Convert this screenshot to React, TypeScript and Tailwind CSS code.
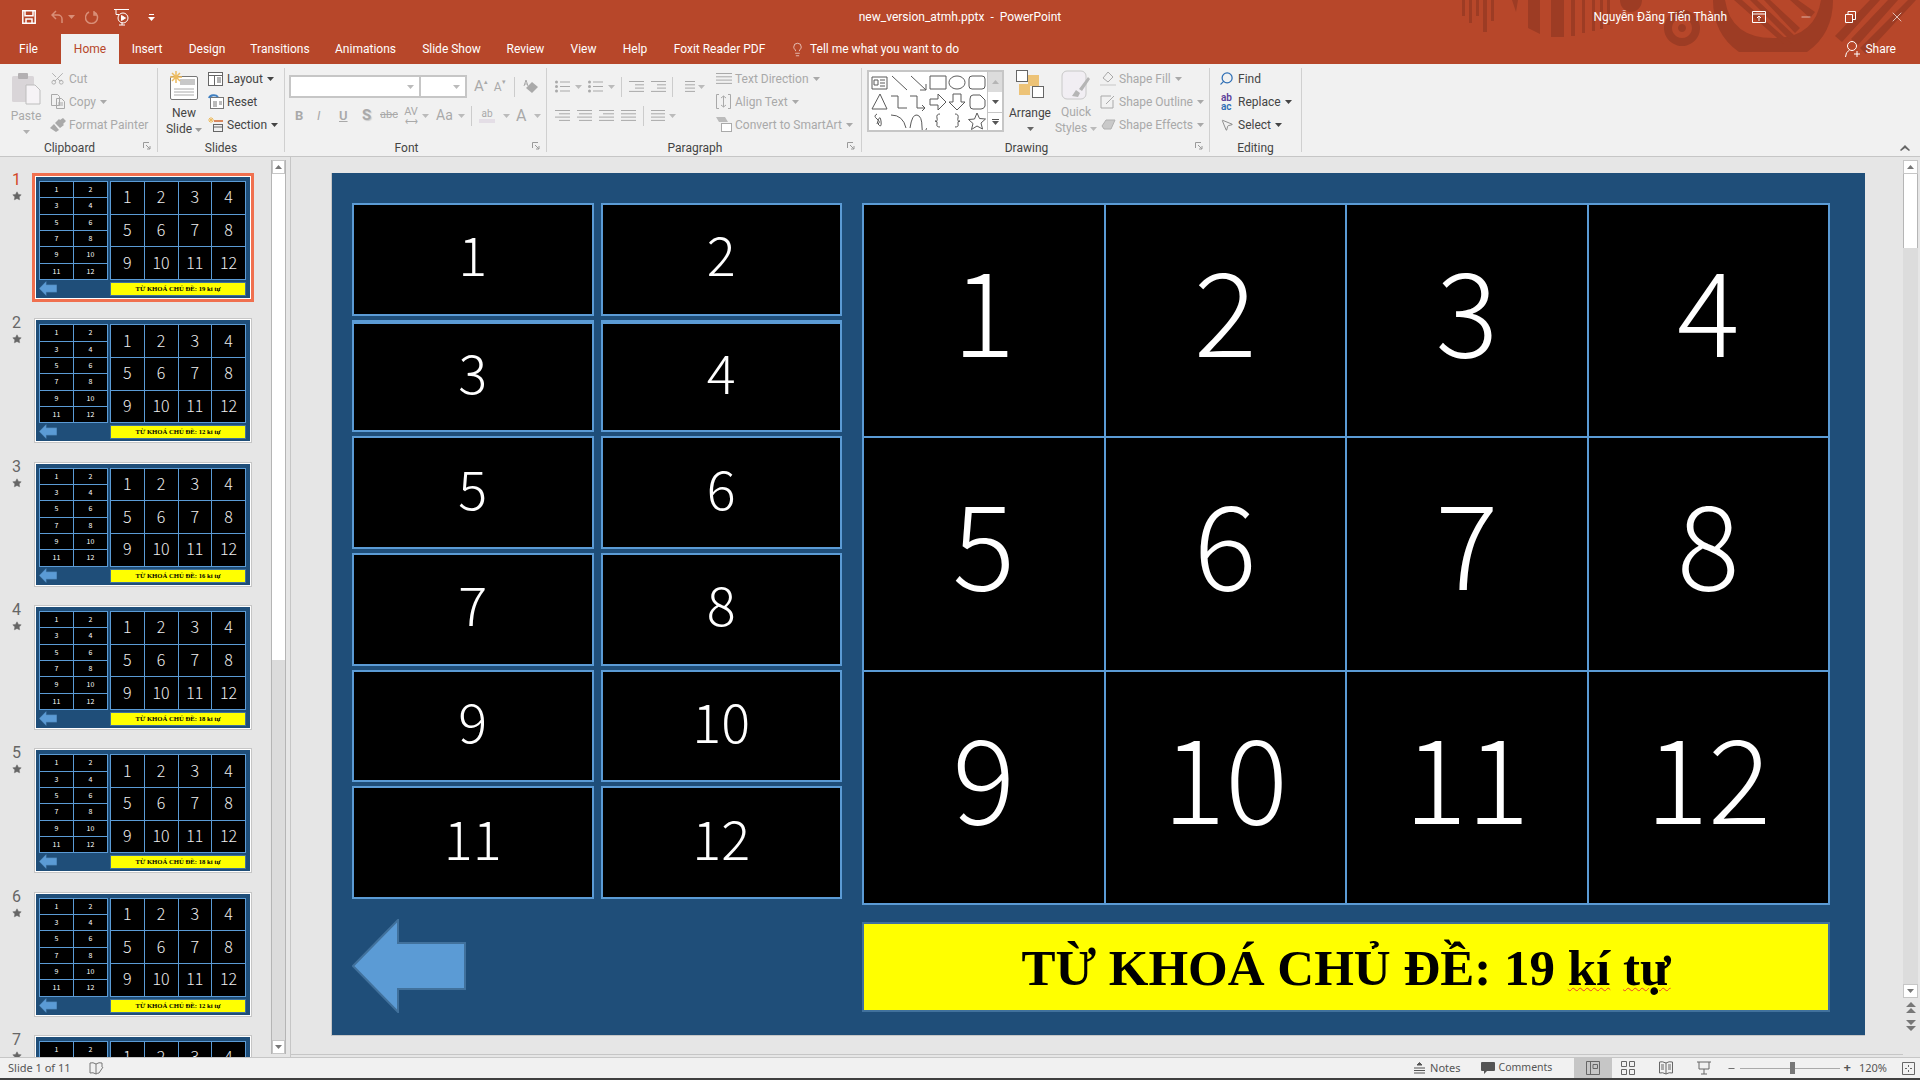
import React from 'react';
import { Lightbulb, Search, Scissors, X, Minus, MousePointer2, Star } from 'lucide-react';

const DIM = 'text-[#a9a9a9]';
const INK = 'text-[#444444]';

const Caret = ({ className = 'text-[#9a9a9a]' }: { className?: string }) => (
    <svg width="7" height="4" viewBox="0 0 7 4" className={`inline-block shrink-0 ${className}`}>
        <path d="M0 0h7L3.5 4z" fill="currentColor" />
    </svg>
);

const Launcher = () => (
    <svg width="8" height="8" viewBox="0 0 8 8" className="absolute right-[6px] bottom-[2px] text-[#9a9a9a]" fill="none" stroke="currentColor">
        <path d="M.5 6V.5H6M3 3l4 4M7 4v3H4" />
    </svg>
);

const Group = ({ w, label, launcher, children }: { w: string; label: string; launcher?: boolean; children: React.ReactNode }) => (
    <div className={`relative flex h-[84px] shrink-0 flex-col border-r border-[#d0d0d0] ${w}`}>
        <div className="flex h-[73px] shrink-0 items-start">{children}</div>
        <div className={`text-center text-[12px] leading-[14px] text-[#444444] ${launcher ? 'pr-[18px]' : ''}`}>{label}</div>
        {launcher && <Launcher />}
    </div>
);

const Row = ({ icon, text, dim, caret, className = '' }: { icon: React.ReactNode; text: string; dim?: boolean; caret?: boolean; className?: string }) => (
    <div className={`flex h-[23px] items-center gap-[3px] text-[12px] whitespace-nowrap ${dim ? DIM : INK} ${className}`}>
        <span className="flex w-[17px] shrink-0 items-center justify-center">{icon}</span>
        <span>{text}</span>
        {caret && <Caret className="ml-[1px]" />}
    </div>
);

const Lines = ({ rows, w = 14 }: { rows: number[]; w?: number }) => (
    <svg width={w} height="13" viewBox={`0 0 ${w} 13`} stroke="currentColor" fill="none" className={DIM}>
        {rows.map((r, i) => (
            <path key={i} d={`M${r} ${1.5 + i * 3.3}H${w}`} />
        ))}
    </svg>
);

const Bullets = () => (
    <svg width="15" height="13" viewBox="0 0 15 13" className={DIM} fill="currentColor">
        <circle cx="1.500" cy="2" r="1.500" /><circle cx="1.500" cy="6.500" r="1.500" /><circle cx="1.500" cy="11" r="1.500" />
        <path d="M5 1.500h10v1H5zM5 6h10v1H5zM5 10.500h10v1H5z" />
    </svg>
);

const ClipboardGroup = () => (
    <Group w="w-[158px]" label="Clipboard" launcher>
        <div className={`ml-[10px] flex w-[32px] flex-col items-center ${DIM}`}>
            <svg width="30" height="32" viewBox="0 0 30 32" className="mt-[5px]">
                <rect x="1" y="3" width="22" height="26" rx="1.5" fill="#d9d5d8" />
                <rect x="7" y="0" width="10" height="6" rx="1" fill="#b3b0b2" />
                <path d="M15 12h9l5 5v14H15z" fill="#f6f3f6" stroke="#bdbdbd" />
            </svg>
            <span className="mt-[2px] text-[12px] leading-[18px]">Paste</span>
            <Caret className="mt-[5px] text-[#b0b0b0]" />
        </div>
        <div className="ml-[7px] -mt-px flex flex-col">
            <Row dim text="Cut" icon={<Scissors size={15} strokeWidth={1.4} className="-scale-x-100 rotate-90" />} />
            <Row dim caret text="Copy" icon={
                <svg width="14" height="15" viewBox="0 0 14 15" fill="none" stroke="currentColor"><path d="M.5.5h6l2 2v9h-8zM5.500 4.500h5l3 3v7h-8zM7 9h5M7 11h5" /></svg>
            } />
            <Row dim text="Format Painter" icon={
                <svg width="16" height="14" viewBox="0 0 16 14" fill="currentColor"><path d="M0 10l4-4 5 6-3 2zM5 5l4-4 1 1 3-2 3 3-3 3 1 1-4 3z" /></svg>
            } />
        </div>
    </Group>
);

const SlidesGroup = () => (
    <Group w="w-[127px]" label="Slides">
        <div className={`ml-[4px] flex w-[44px] flex-col items-center text-center text-[12px] leading-[16px] ${INK}`}>
            <svg width="32" height="30" viewBox="0 0 32 30" className="mt-[3px]">
                <rect x="2.500" y="5.500" width="27" height="23" rx="1.500" fill="#fff" stroke="#777" />
                <rect x="12" y="8" width="15" height="6" fill="#c8c8c8" />
                <path d="M6 18h20M6 21h20M6 24h20" stroke="#aaa" />
                <path d="M8 0v12M2 6h12M4 2l8 8M12 2l-8 8" stroke="#edbb5f" strokeWidth="1.500" />
            </svg>
            <span className="mt-[4px]">New</span>
            <span>Slide <Caret /></span>
        </div>
        <div className="ml-[1px] -mt-px flex flex-col">
            <Row text="Layout" caret icon={
                <svg width="15" height="14" viewBox="0 0 15 14" fill="#fff" stroke="#666"><rect x=".5" y=".5" width="14" height="13" /><path d="M.5 3.500h14M6.500 3.500v10M9 6h4M9 8h4M9 10h4" /></svg>
            } />
            <Row text="Reset" icon={
                <svg width="16" height="15" viewBox="0 0 16 15" fill="#fff" stroke="#777"><rect x="2.500" y="3.500" width="13" height="11" /><path d="M5 8h4M5 10h4M5 12h4M11 8h3M11 10h3" /><path d="M1 4a5 4 0 0 1 9-1" stroke="#3f7fc1" strokeWidth="2" fill="none" /></svg>
            } />
            <Row text="Section" caret icon={
                <svg width="16" height="15" viewBox="0 0 16 15" fill="none"><path d="M3 0v6M0 3h6M1 1l4 4M5 1L1 5" stroke="#edbb5f" /><path d="M6 4h9" stroke="#d2652c" strokeWidth="1.500" /><rect x="5.500" y="7.500" width="9" height="7" stroke="#666" /><path d="M5.500 10h9" stroke="#666" /></svg>
            } />
        </div>
    </Group>
);

const FontGroup = () => (
    <Group w="w-[262px]" label="Font" launcher>
        <div className={`flex flex-col pl-[4px] pt-[7px] ${DIM}`}>
            <div className="flex h-[23px] items-center">
                <div className="flex h-[23px] w-[132px] items-center justify-end border-2 border-[#c6c6c6] bg-white pr-[5px]"><Caret className="text-[#bbbbbb]" /></div>
                <div className="flex h-[23px] w-[46px] items-center justify-end border-y-2 border-r-2 border-[#c6c6c6] bg-white pr-[5px]"><Caret className="text-[#bbbbbb]" /></div>
                <span className="ml-[7px] text-[15px]">A</span><span className="mb-[8px] text-[7px]">▴</span>
                <span className="ml-[6px] text-[12px]">A</span><span className="mb-[8px] text-[7px]">▾</span>
                <div className="mx-[8px] h-[20px] w-px bg-[#cccccc]" />
                <svg width="16" height="16" viewBox="0 0 16 16" fill="currentColor"><path d="M3 9L9 3l6 5-6 6z" /><path d="M1 7l2-6 2 6M2 5h2" fill="none" stroke="currentColor" /></svg>
            </div>
            <div className="mt-[6px] flex h-[23px] items-center text-[13px]">
                <span className="ml-[6px] w-[22px] font-bold">B</span>
                <span className="w-[22px] italic">I</span>
                <span className="w-[23px] font-semibold underline">U</span>
                <span className="w-[18px] text-[15px] font-bold [text-shadow:1px_1px_1px_#cccccc]">S</span>
                <span className="w-[20px] text-[11px] line-through">abc</span>
                <span className="flex w-[22px] flex-col items-center text-[11px] leading-[11px]">AV<span className="text-[9px] leading-[8px]">⟷</span></span>
                <Caret className="text-[#bbbbbb]" />
                <span className="ml-[7px] w-[22px] text-[14px]">Aa</span>
                <Caret className="text-[#bbbbbb]" />
                <div className="mx-[6px] h-[20px] w-px bg-[#cccccc]" />
                <span className="flex w-[18px] flex-col items-center text-[10px] leading-[11px]">ab<span className="h-[4px] w-[16px] bg-[#e4dee6]" /></span>
                <Caret className="ml-[7px] text-[#bbbbbb]" />
                <span className="ml-[6px] text-[16px]">A</span>
                <Caret className="ml-[8px] text-[#bbbbbb]" />
            </div>
        </div>
    </Group>
);

const ParagraphGroup = () => (
    <Group w="w-[315px]" label="Paragraph" launcher>
        <div className={`flex w-[168px] flex-col pl-[8px] pt-[7px] ${DIM}`}>
            <div className="flex h-[23px] items-center">
                <Bullets />
                <Caret className="ml-[5px] mr-[6px] text-[#bbbbbb]" />
                <Bullets />
                <Caret className="ml-[5px] mr-[6px] text-[#bbbbbb]" />
                <div className="h-[20px] w-px bg-[#cccccc]" />
                <span className="mx-[7px]"><Lines rows={[0, 6, 6, 0]} w={15} /></span>
                <Lines rows={[0, 6, 6, 0]} w={15} />
                <div className="mx-[6px] h-[20px] w-px bg-[#cccccc]" />
                <Lines rows={[6, 6, 6, 6]} w={16} />
                <Caret className="ml-[3px] text-[#bbbbbb]" />
            </div>
            <div className="mt-[6px] flex h-[23px] items-center gap-[7px]">
                <Lines rows={[0, 4, 0, 4]} w={15} />
                <Lines rows={[0, 2, 0, 2]} w={15} />
                <Lines rows={[0, 4, 0, 0]} w={15} />
                <Lines rows={[0, 0, 0, 0]} w={15} />
                <div className="h-[20px] w-px bg-[#cccccc]" />
                <Lines rows={[0, 0, 0, 0]} w={14} />
                <Caret className="-ml-[3px] text-[#bbbbbb]" />
            </div>
        </div>
        <div className="-mt-px flex flex-col">
            <Row dim caret text="Text Direction" icon={<Lines rows={[0, 0, 0, 0]} w={16} />} />
            <Row dim caret text="Align Text" icon={
                <svg width="15" height="15" viewBox="0 0 15 15" fill="none" stroke="currentColor"><path d="M3 .5H.5v14H3M12 .5h2.500v14H12M7.500 2v11M5 4l2.500-2L10 4M5 11l2.500 2 2.500-2" /></svg>
            } />
            <Row dim caret text="Convert to SmartArt" icon={
                <svg width="16" height="15" viewBox="0 0 16 15" fill="#bbb"><path d="M0 0h9l3 5H3z" /><rect x="5.500" y="6.500" width="10" height="8" fill="#fff" stroke="#aaa" /></svg>
            } />
        </div>
    </Group>
);

const shapePaths = [
    'M1 3h15v12H1zM3 6h4v5H3zM9 6h5M9 9h5M9 12h5',
    'M2 2L17 16',
    'M2 2L17 16M17 10v6h-6',
    'M1 2h16v13H1z',
    'M9 2a8 6.500 0 1 0 .01 0z',
    'M4 2h10q3 0 3 3v7q0 3-3 3H4q-3 0-3-3V5q0-3 3-3z',
    'M9 1L1 16h15z',
    'M1 3h7v12h9',
    'M1 3h7v12h7M13 12l3 3-3 3',
    'M1 6h8V1l8 8-8 8v-5H1z',
    'M5 1h8v8h4l-8 8-8-8h4z',
    'M5 2h7l5 5v6q-1 3-4 3H5q-3 0-3-3V6q0-4 3-4z',
    'M6 2q-4 2 0 5t1 5q4 5 3-3t-4 3',
    'M1 3q12 0 15 13',
    'M1 16Q3 2 8 3t5 12 5 1',
    'M11 2Q7 2 8 6t-2 3q3 0 2 3t3 3',
    'M7 2q4 0 3 4t2 3q-3 0-2 3t-3 3',
    'M9 1l2.500 5.500 6 .5-4.500 4 1.500 6L9 14l-5.500 3.500L5 11.500.5 7.500l6-.5z',
];

const DrawingGroup = () => (
    <Group w="w-[348px]" label="Drawing" launcher>
        <div className="ml-[5px] mt-[2px] flex h-[62px] w-[137px] border-2 border-[#c6c6c6] bg-white">
            <div className="grid w-[120px] grid-cols-6 grid-rows-3 px-[1px] pt-[1px]">
                {shapePaths.map((d, i) => (
                    <div key={i} className="flex items-center justify-center">
                        <svg width="18" height="18" viewBox="0 0 18 18" fill="none" stroke="#5a5a5a">
                            <path d={d} />
                        </svg>
                    </div>
                ))}
            </div>
            <div className="flex w-[15px] flex-col border-l border-[#c6c6c6]">
                <div className="flex h-[20px] items-center justify-center bg-[#dcdcdc]"><Caret className="rotate-180 text-[#b5b5b5]" /></div>
                <div className="flex h-[20px] items-center justify-center"><Caret className="text-[#555555]" /></div>
                <div className="flex flex-1 flex-col items-center justify-center gap-[1px] border-t border-[#c6c6c6]"><span className="h-px w-[7px] bg-[#555555]" /><Caret className="text-[#555555]" /></div>
            </div>
        </div>
        <div className={`ml-[3px] flex w-[46px] flex-col items-center text-[12px] ${INK}`}>
            <svg width="28" height="28" viewBox="0 0 28 28" className="mt-[2px]">
                <rect x="12" y="5" width="11" height="11" fill="#edc377" />
                <rect x="3" y="14" width="11" height="11" fill="#edc377" />
                <rect x=".5" y=".5" width="11" height="11" fill="#fff" stroke="#666" />
                <rect x="16.500" y="16.500" width="11" height="11" fill="#fff" stroke="#666" />
            </svg>
            <span className="mt-[6px] leading-[18px]">Arrange</span>
            <Caret className="mt-[5px] text-[#666666]" />
        </div>
        <div className={`ml-[4px] flex w-[38px] flex-col items-center text-center text-[12px] leading-[16px] ${DIM}`}>
            <svg width="30" height="30" viewBox="0 0 30 30" className="mt-[2px]">
                <rect x="1" y="1" width="24" height="28" rx="5" fill="#f1eef3" stroke="#c8c8c8" />
                <path d="M11 26l4-6 4 3-2 4zM18 19l9-12 2 2-8 12z" fill="#b5b5b5" />
            </svg>
            <span className="mt-[4px]">Quick</span>
            <span className="whitespace-nowrap">Styles <Caret className="text-[#bbbbbb]" /></span>
        </div>
        <div className="ml-[4px] -mt-px flex flex-col">
            <Row dim caret text="Shape Fill" icon={
                <svg width="16" height="15" viewBox="0 0 16 15" fill="none" stroke="currentColor"><path d="M3 7l5-6 5 5-5 5z" /><path d="M0 14h16" strokeWidth="2" stroke="#dcdcdc" /></svg>
            } />
            <Row dim caret text="Shape Outline" icon={
                <svg width="16" height="15" viewBox="0 0 16 15" fill="none" stroke="currentColor"><path d="M11 2H1v12h12V6M6 10l8-8" /></svg>
            } />
            <Row dim caret text="Shape Effects" icon={
                <svg width="16" height="15" viewBox="0 0 16 15" fill="#c9c9c9" stroke="#b0b0b0"><path d="M2 9l4-6h9l-4 9H4z" /></svg>
            } />
        </div>
    </Group>
);

const EditingGroup = () => (
    <Group w="w-[92px]" label="Editing">
        <div className="ml-[8px] -mt-px flex flex-col">
            <Row text="Find" icon={<Search size={15} strokeWidth={2} className="-scale-x-100 text-[#2f6fb5]" />} />
            <Row text="Replace" caret icon={<span className="text-[10px] leading-[9px] font-semibold text-[#5b3f99]">ab<br /><span className="text-[#2f6fb5]">ac</span></span>} />
            <Row text="Select" caret icon={<MousePointer2 size={14} strokeWidth={1.2} className="text-[#666666]" />} />
        </div>
    </Group>
);

const tabs: [string, string][] = [
    ['Insert', 'w-[56px]'], ['Design', 'w-[64px]'], ['Transitions', 'w-[82px]'], ['Animations', 'w-[89px]'],
    ['Slide Show', 'w-[83px]'], ['Review', 'w-[65px]'], ['View', 'w-[51px]'], ['Help', 'w-[52px]'], ['Foxit Reader PDF', 'w-[117px]'],
];

const TitleBar = () => (
    <header className="relative h-[64px] shrink-0 bg-[#b7472a] text-white">
        {/* background pattern of the Office theme */}
        <svg width="480" height="64" viewBox="1440 0 480 64" className="absolute top-0 right-0" fill="#9d3c24">
            <path d="M1462 0h3v16h-3zM1469 0h3v23h-3zM1476 0h3v16h-3zM1483 0h4v32h-4zM1491 0h3v21h-3zM1512 0h6l-2 12zM1528 0h12v34l-12-6zM1551 0h13v37h-13zM1571 0h4v36h-4zM1582 0h3v33h-3zM1592 0h3v31h-3zM1600 0h3v29h-3zM1607 0h3v25h-3zM1620 0h22a11 12 0 0 1-22 0z" />
            <path fillRule="evenodd" d="M1682 10a18 18 0 1 0 .01 0zM1682 18a10 10 0 1 1-.01 0zM1682 24a4 4 0 1 0 .01 0z" />
            <path fillRule="evenodd" d="M1713 0h12q6 38 48 38t48-38h12q0 34-26 52h-68q-26-18-26-52z" />
            <path d="M1734 0h8l50 44-8 0zM1750 0h7l38 36-6 3zM1764 0h6l30 28-5 5zM1790 0h8l17 12-5 6zM1870 0h10l-38 42-7-6zM1888 0h10l-40 45-7-6zM1908 0h8l-50 54-6-6z" />
        </svg>
        <div className="relative flex h-[34px] items-center">
            <svg width="14" height="14" viewBox="0 0 14 14" className="ml-[22px]" fill="none" stroke="currentColor" strokeWidth="1.500">
                <path d="M.8.8h12.400v12.400H.8zM3 .8v5h8v-5M4 13V9h6v4" />
            </svg>
            <svg width="12" height="14" viewBox="0 0 12 14" className="ml-[15px] text-[#d98e77]" fill="none" stroke="currentColor" strokeWidth="1.500">
                <path d="M5 1L1 5l4 4M1 5h6a4 4 0 0 1 4 4v4" />
            </svg>
            <Caret className="ml-[5px] text-[#d98e77]" />
            <svg width="14" height="14" viewBox="0 0 14 14" className="ml-[10px] text-[#d98e77]" fill="none" stroke="currentColor" strokeWidth="1.500">
                <path d="M9 2a6 6 0 1 1-5 0M9 1v4h3" />
            </svg>
            <svg width="16" height="18" viewBox="0 0 16 18" className="ml-[15px]" fill="none" stroke="currentColor">
                <path d="M0 1.500h15M2 1.500v5h3M8 17l0-3M5 17h6" /><circle cx="9" cy="10" r="5" /><path d="M7.500 7.500v5l4-2.500z" fill="currentColor" />
            </svg>
            <svg width="7" height="7" viewBox="0 0 7 7" className="ml-[18px]" fill="currentColor"><path d="M1 0h5v1H1zM0 3h7L3.500 7z" /></svg>

            <div className="absolute left-1/2 -translate-x-1/2 text-[12px]">new_version_atmh.pptx&nbsp; -&nbsp; PowerPoint</div>

            <div className="ml-auto flex items-center">
                <span className="text-[12px]">Nguyễn Đăng Tiến Thành</span>
                <svg width="14" height="12" viewBox="0 0 14 12" className="ml-[25px]" fill="none" stroke="currentColor"><path d="M.5.500h13v11H.5zM.5 3h13M7 10V5M5 7l2-2 2 2" /></svg>
                <Minus size={14} strokeWidth={1} className="ml-[33px]" />
                <svg width="11" height="12" viewBox="0 0 11 12" className="ml-[32px]" fill="none" stroke="currentColor"><path d="M.5 3.500h7v8h-7zM3 3V.5h7.500v8H8" /></svg>
                <X size={16} strokeWidth={1} className="mr-[15px] ml-[33px]" />
            </div>
        </div>
        <nav className="relative flex h-[30px] text-[12px]">
            <div className="flex w-[61px] items-center justify-center pr-[4px]">File</div>
            <div className="flex w-[58px] items-center justify-center bg-[#f1f1f1] text-[#b7472a]">Home</div>
            {tabs.map(([t, w]) => (
                <div key={t} className={`flex items-center justify-center ${w}`}>{t}</div>
            ))}
            <div className="ml-[12px] flex items-center gap-[5px]">
                <Lightbulb size={15} strokeWidth={1} />
                Tell me what you want to do
            </div>
            <div className="ml-auto mr-[24px] flex items-center gap-[4px]">
                <svg width="16" height="18" viewBox="0 0 16 18" fill="none" stroke="currentColor"><circle cx="7" cy="6" r="4.500" /><path d="M.5 17q0-5 4-7M9 14h6M12 11v6" /></svg>
                Share
            </div>
        </nav>
    </header>
);

const Ribbon = () => (
    <div className="relative flex h-[93px] shrink-0 border-b border-[#c6c6c6] bg-[#f1f1f1] pt-[4px]">
        <ClipboardGroup />
        <SlidesGroup />
        <FontGroup />
        <ParagraphGroup />
        <DrawingGroup />
        <EditingGroup />
        <svg width="10" height="7" viewBox="0 0 10 7" className="absolute right-[10px] bottom-[4px] text-[#666666]" fill="currentColor"><path d="M5 0l5 5-1 1-4-3-4 3-1-1z" /></svg>
    </div>
);

const Arrow = ({ className }: { className: string }) => (
    <svg viewBox="0 0 114 94" className={className}>
        <path d="M46 1L1 47l45 46V70h67V24H46z" fill="#5b9bd5" stroke="#41719c" strokeWidth="2" />
    </svg>
);

const digits = ['1', '2', '3', '4', '5', '6', '7', '8', '9', '10', '11', '12'];
const FIGURE = "font-['Noto_Sans_CJK_JP','Noto_Sans',sans-serif] font-light";

const MiniSlide = ({ chars }: { chars: number }) => (
    <div className="flex h-[121px] w-[214px] gap-[2px] bg-[#1f4e79] pt-[4px] pl-[3px]">
        <div className="flex w-[69px] flex-col">
            <div className="grid h-[99px] grid-cols-2 grid-rows-6 gap-[1px] bg-[#5b9bd5] p-[1px]">
                {digits.map((d) => (
                    <div key={d} className="flex items-center justify-center bg-black pb-[1px] font-['Noto_Sans_CJK_JP','Noto_Sans',sans-serif] text-[7px] text-white">{d}</div>
                ))}
            </div>
            <Arrow className="mt-[1px] h-[15px] w-[18px]" />
        </div>
        <div className="flex w-[136px] flex-col">
            <div className="grid h-[99px] grid-cols-4 grid-rows-3 gap-[1px] bg-[#5b9bd5] p-[1px]">
                {digits.map((d) => (
                    <div key={d} className={`flex items-center justify-center bg-black pb-[3px] text-[16px] text-[#eeeeee] ${FIGURE}`}>{d}</div>
                ))}
            </div>
            <div className="mt-[2px] flex h-[14px] items-center justify-center border border-[#41719c] bg-[#ffff00] font-['Liberation_Serif'] text-[6.700px] font-bold text-black">
                TỪ KHOÁ CHỦ ĐỀ: {chars} kí tự
            </div>
        </div>
    </div>
);

const Thumb = ({ n, chars, selected }: { n: number; chars: number; selected?: boolean }) => (
    <div className="flex h-[143.330px] shrink-0 items-center">
        <div className="flex w-[32px] flex-col items-center self-start pt-[3px] pl-[1px]">
            <span className={`text-[16px] leading-[22px] ${selected ? 'text-[#d24726]' : 'text-[#666666]'}`}>{n}</span>
            <Star size={10} strokeWidth={1} className="fill-[#666666] text-[#666666]" />
        </div>
        <div className="flex w-[222px] justify-center">
            <div className={`bg-white ${selected ? 'border-[3px] border-[#f0704f]' : 'border border-[#c6c6c6]'}`}>
                <div className="border border-white"><MiniSlide chars={chars} /></div>
            </div>
        </div>
    </div>
);

const ScrollBtn = ({ up }: { up?: boolean }) => (
    <div className="flex h-[14px] shrink-0 items-center justify-center border border-[#c6c6c6] bg-white">
        <Caret className={up ? 'rotate-180 text-[#777777]' : 'text-[#777777]'} />
    </div>
);

const Sidebar = () => (
    <aside className="flex w-[291px] shrink-0 border-r border-[#c6c6c6]">
        <div className="flex w-[271px] flex-col overflow-hidden pt-[9px]">
            {[19, 12, 16, 18, 18, 12, 12].map((c, i) => (
                <Thumb key={i} n={i + 1} chars={c} selected={i === 0} />
            ))}
        </div>
        <div className="mt-[3px] mb-[3px] flex w-[15px] flex-col border-x border-[#b5b5b5] bg-[#dcdcdc]">
            <ScrollBtn up />
            <div className="h-[486px] bg-white" />
            <div className="flex-1" />
            <ScrollBtn />
        </div>
    </aside>
);

const SlideCanvas = () => (
    <div className="flex h-[863px] w-[1534px] gap-[20px] border-b border-l border-[#c6c6c6] bg-[#1f4e79] pt-[30px] pl-[20px]">
        <div className="flex w-[490px] flex-col">
            <div className="grid h-[696px] grid-cols-2 grid-rows-6 gap-x-[7px] gap-y-[4px]">
                {digits.map((d, i) => (
                    <div key={d} className={`flex items-center justify-center border-2 border-[#5b9bd5] bg-black pb-[13px] text-[54px] text-white ${FIGURE} ${i === 2 || i === 3 ? 'border-t-4' : ''}`}>{d}</div>
                ))}
            </div>
            <Arrow className="mt-[20px] h-[94px] w-[114px]" />
        </div>
        <div className="flex w-[968px] flex-col">
            <div className="grid h-[702px] grid-cols-4 grid-rows-3 gap-[2px] bg-[#5b9bd5] p-[2px]">
                {digits.map((d) => (
                    <div key={d} className={`flex items-center justify-center bg-black pb-[28px] text-[117px] text-white ${FIGURE}`}>{d}</div>
                ))}
            </div>
            <div className="mt-[17px] flex h-[90px] items-center justify-center border-2 border-[#41719c] bg-[#ffff00] pt-[2px] font-['Liberation_Serif'] text-[51px] font-bold text-black">
                <span>TỪ KHOÁ CHỦ ĐỀ: 19 <span className="underline decoration-[#e8402a] decoration-wavy decoration-1 underline-offset-2">kí</span> <span className="underline decoration-[#e8402a] decoration-wavy decoration-1 underline-offset-2">tự</span></span>
            </div>
        </div>
    </div>
);

const Workspace = () => (
    <main className="flex min-w-0 flex-1">
        <div className="flex flex-1 flex-col">
            <div className="flex-1 pt-[16px] pl-[40px]"><SlideCanvas /></div>
            <div className="mb-[2px] h-px bg-[#c6c6c6]" />
        </div>
        <div className="mt-[3px] mr-[2px] flex h-[872px] w-[15px] flex-col items-center">
            <div className="w-full"><ScrollBtn up /></div>
            <div className="h-[74px] w-full border-x border-[#b5b5b5] bg-white" />
            <div className="w-full flex-1 bg-[#dcdcdc]" />
            <div className="w-full"><ScrollBtn /></div>
            <svg width="10" height="32" viewBox="0 0 10 32" className="mt-[2px] shrink-0 text-[#777777]" fill="currentColor">
                <path d="M5 2l5 5H0zM5 8l5 5H0zM5 31l5-5H0zM5 25l5-5H0z" />
            </svg>
        </div>
    </main>
);

const StatusBar = () => (
    <footer className="flex h-[21px] shrink-0 items-center border-t border-[#c6c6c6] bg-[#f1f1f1] font-['Noto_Sans'] text-[11px] text-[#555555]">
        <span className="ml-[8px]">Slide 1 of 11</span>
        <svg width="15" height="13" viewBox="0 0 15 13" className="ml-[18px]" fill="none" stroke="#777"><path d="M1 1q3-1 6 1v10q-3-2-6-1zM7 2q3-2 6-1v4M7 12q2-1 3-1l4-6" /></svg>
        <div className="ml-auto flex h-full items-center">
            <svg width="11" height="12" viewBox="0 0 11 12" fill="none" stroke="#555"><path d="M0 6h11M0 8.500h11M0 11h11" /><path d="M3 3l2.500-2.500L8 3z" fill="#555" /></svg>
            <span className="ml-[5px]">Notes</span>
            <svg width="14" height="14" viewBox="0 0 14 14" fill="#555" className="ml-[20px]"><path d="M1 1h12q1 0 1 1v7q0 1-1 1H6l-3 3v-3H1q-1 0-1-1V2q0-1 1-1z" /></svg>
            <span className="ml-[4px] w-[56px] text-[10.500px]">Comments</span>
            <div className="ml-[19px] flex h-full w-[38px] items-center justify-center bg-[#c6c6c6]">
                <svg width="14" height="14" viewBox="0 0 14 14" fill="none" stroke="#666"><path d="M.5.5h13v13H.5zM4.500.5v13M7 3.500h4.500v4H7z" /></svg>
            </div>
            <svg width="14" height="14" viewBox="0 0 14 14" fill="none" stroke="#666" className="ml-[9px]"><path d="M.5.5h5v5h-5zM8.500.5h5v5h-5zM.5 8.500h5v5h-5zM8.500 8.500h5v5h-5z" /></svg>
            <svg width="14" height="14" viewBox="0 0 14 14" fill="none" stroke="#666" className="ml-[24px]"><path d="M7 2Q3 0 .5 1v11q3-1 6.500 1 3-2 6.500-1V1Q10 0 7 2zM7 2v11M2 4h3M2 6h3M2 8h3M9 4h3M9 6h3M9 8h3" /></svg>
            <svg width="14" height="14" viewBox="0 0 14 14" fill="none" stroke="#666" className="ml-[24px]"><path d="M0 1h14M2 1v7h10V1M7 8v5M4 13h6" /></svg>
            <Minus size={9} strokeWidth={2.500} className="ml-[16px] text-[#666666]" />
            <div className="relative ml-[4px] h-px w-[100px] bg-[#aaaaaa]">
                <div className="absolute top-[-6px] left-[50px] h-[12px] w-[5px] bg-[#777777]" />
            </div>
            <span className="ml-[4px] text-[13px] font-bold">+</span>
            <span className="ml-[8px]">120%</span>
            <svg width="13" height="13" viewBox="0 0 13 13" fill="none" stroke="#666" className="mr-[5px] ml-[15px]"><path d="M.5.500h12v12H.5zM3 6.500h2M8 6.500h2M6.500 3v2M6.500 8v2" /></svg>
        </div>
    </footer>
);

export default function App() {
    return (
        <div className="flex h-screen w-[1920px] flex-col overflow-hidden bg-[#e6e6e6] font-['Roboto',sans-serif]">
            <TitleBar />
            <Ribbon />
            <div className="flex min-h-0 flex-1">
                <Sidebar />
                <Workspace />
            </div>
            <StatusBar />
            <div className="h-[2px] shrink-0 bg-[#404040]" />
        </div>
    );
}
